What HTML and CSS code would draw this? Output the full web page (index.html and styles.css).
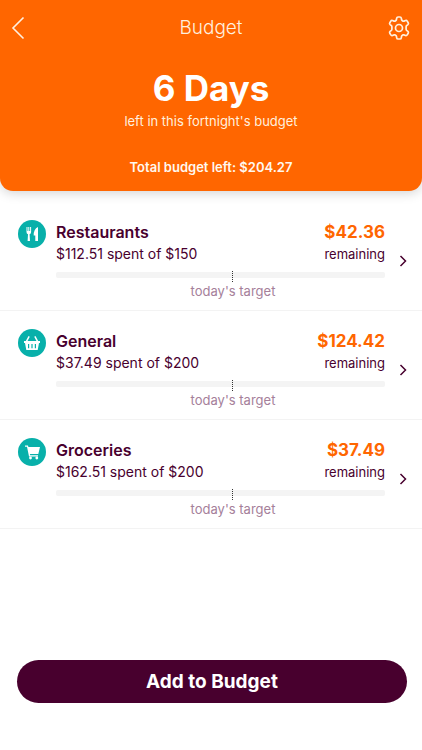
FILE: index.html
```html
<!DOCTYPE html>
<html lang="en">
<head>
<meta charset="utf-8">
<meta name="viewport" content="width=device-width, initial-scale=1">
<title>Budget</title>
<link rel="stylesheet" href="styles.css">
</head>
<body>
<header class="hero">
  <nav class="bar">
    <button class="icon-button" type="button" aria-label="Back">
      <svg width="14" height="24" viewBox="0 0 14 24" fill="none" stroke="currentColor" stroke-width="1.6"><path d="M12.500 1.500 2 12l10.500 10.500"/></svg>
    </button>
    <h1 class="bar-title">Budget</h1>
    <button class="icon-button" type="button" aria-label="Settings">
      <svg width="24" height="24" viewBox="0 0 24 24" fill="none" stroke="currentColor" stroke-width="1.700" stroke-linejoin="round"><path d="M9.700 2.200Q9.900 1 11 1h2q1.100 0 1.300 1.200l.3 1.600q.2.700.8 1l.3.200q.6.400 1.300.100l1.500-.6q1.100-.4 1.700.6l1 1.700q.6 1-.3 1.800l-1.300 1.100q-.5.500-.5 1.200v2.200q0 .7.500 1.200l1.300 1.100q.9.800.3 1.800l-1 1.700q-.6 1-1.700.6l-1.500-.6q-.7-.3-1.300.100l-.3.200q-.6.300-.8 1l-.3 1.600Q14.100 23 13 23h-2q-1.100 0-1.300-1.200l-.3-1.600q-.2-.7-.8-1l-.3-.2q-.6-.4-1.300-.1l-1.500.6q-1.100.4-1.700-.6l-1-1.700q-.6-1 .3-1.800l1.300-1.100q.5-.5.5-1.200v-2.200q0-.7-.5-1.200L3.100 8.600q-.9-.8-.3-1.800l1-1.700q.6-1 1.700-.6l1.500.6q.7.300 1.300-.1l.3-.2q.6-.3.8-1z"/><circle cx="12" cy="12" r="3.500"/></svg>
    </button>
  </nav>
  <p class="days">6 Days</p>
  <p class="period">left in this fortnight's budget</p>
  <p class="total">Total budget left: $204.27</p>
</header>
<main class="content">
  <ul class="budgets">
    <li><a class="budget" href="#restaurants">
      <span class="badge"><svg width="28" height="28" viewBox="0 0 28 28" fill="currentColor"><path d="M8.500 7h1v4h.8V7h1v4h.8V7h1v5q0 1.700-1.500 2.300l.4 6.700H9.600l.4-6.700q-1.500-.6-1.500-2.300zM20 7v14h-2.700v-5.500h-1.600q-.2-6.500 4.300-8.500z"/></svg></span>
      <span class="details">
        <span class="line"><strong class="name">Restaurants</strong><strong class="amount">$42.36</strong></span>
        <span class="line"><span class="spent">$112.51 spent of $150</span><span class="remaining">remaining</span></span>
        <span class="track"><span class="marker"></span></span>
        <span class="target">today's target</span>
      </span>
      <svg class="chevron" width="8" height="12" viewBox="0 0 8 12"><path d="M1.500 1 6.500 6l-5 5"/></svg>
    </a></li>
    <li><a class="budget" href="#general">
      <span class="badge"><svg width="28" height="28" viewBox="0 0 28 28" fill="currentColor"><path d="m10.500 7 1.300.8-2.300 4.200h9l-2.300-4.200 1.300-.8 2.700 5H22v2h-1l-1.300 7H8.300L7 14H6v-2h1.800zM10 15v4.300h1.200V15zm3.400 0v4.300h1.200V15zm3.400 0v4.300H18V15z" fill-rule="evenodd"/></svg></span>
      <span class="details">
        <span class="line"><strong class="name">General</strong><strong class="amount">$124.42</strong></span>
        <span class="line"><span class="spent">$37.49 spent of $200</span><span class="remaining">remaining</span></span>
        <span class="track"><span class="marker"></span></span>
        <span class="target">today's target</span>
      </span>
      <svg class="chevron" width="8" height="12" viewBox="0 0 8 12"><path d="M1.500 1 6.500 6l-5 5"/></svg>
    </a></li>
    <li><a class="budget" href="#groceries">
      <span class="badge"><svg width="28" height="28" viewBox="0 0 28 28" fill="currentColor"><path d="M7 7.500h3l.4 1.500H22l-1.700 7h-8.400l.3 1.200h7.800v1.300h-9L9 8.800H7z"/><circle cx="12.500" cy="20" r="1.400"/><circle cx="18.800" cy="20" r="1.400"/></svg></span>
      <span class="details">
        <span class="line"><strong class="name">Groceries</strong><strong class="amount">$37.49</strong></span>
        <span class="line"><span class="spent">$162.51 spent of $200</span><span class="remaining">remaining</span></span>
        <span class="track"><span class="marker"></span></span>
        <span class="target">today's target</span>
      </span>
      <svg class="chevron" width="8" height="12" viewBox="0 0 8 12"><path d="M1.500 1 6.500 6l-5 5"/></svg>
    </a></li>
  </ul>
  <button class="add" type="button">Add to Budget</button>
</main>
</body>
</html>
```
FILE: styles.css
```css
* { box-sizing: border-box; }

body {
  margin: 0;
  min-height: 100vh;
  display: flex;
  flex-direction: column;
  background: #fff;
  color: #48002e;
  font-family: Inter, "Liberation Sans", sans-serif;
  font-size: 14px;
  line-height: 22px;
}

h1, p, ul { margin: 0; padding: 0; }
button { font: inherit; cursor: pointer; }

.hero {
  padding: 11px 11px 13px;
  border-radius: 0 0 13px 13px;
  background: #ff6600;
  color: #fff;
  text-align: center;
  box-shadow: 0 2px 12px rgb(0 0 0 / 18%);
}

.bar {
  display: grid;
  grid-template-columns: 1fr auto 1fr;
  align-items: center;
  height: 33px;
}

.bar-title {
  color: #fff0df;
  font-size: 19px;
  font-weight: 300;
  line-height: 24px;
}

.icon-button {
  display: flex;
  padding: 0;
  border: 0;
  background: none;
  color: #fff0df;
}

.icon-button:last-child { justify-self: end; }

.days {
  margin-top: 22px;
  font-size: 35px;
  font-weight: 700;
  line-height: 44px;
}

.period {
  color: #fff0df;
  font-size: 13px;
}

.total {
  margin-top: 24px;
  color: #fff8ef;
  font-size: 13px;
  font-weight: 600;
}

.content {
  flex: 1;
  display: flex;
  flex-direction: column;
  padding-top: 11px;
}

.budgets { list-style: none; }

.budget {
  display: flex;
  gap: 10px;
  padding: 18px 15px 8px 18px;
  border-bottom: 1px solid #f3f3f3;
  color: inherit;
  text-decoration: none;
}

.badge {
  width: 28px;
  height: 28px;
  border-radius: 50%;
  background: #08b0aa;
  color: #fff;
}

.details {
  flex: 1;
  display: flex;
  flex-direction: column;
}

.line {
  display: flex;
  justify-content: space-between;
}

.name,
.amount { line-height: 24px; }

.line + .line { line-height: 20px; }

.name {
  font-size: 16px;
  font-weight: 600;
}

.amount {
  color: #ff6600;
  font-size: 17px;
  font-weight: 700;
}

.remaining { font-size: 13px; }

.track {
  position: relative;
  height: 6px;
  margin: 8px 0 2px;
  border-radius: 2px;
  background: #f4f4f4;
}

.marker {
  position: absolute;
  top: -1px;
  left: 53.5%;
  height: 11px;
  border-left: 1px dotted #333;
}

.target {
  align-self: center;
  padding-left: 25px;
  color: #a5809a;
  font-size: 13px;
}

.chevron {
  align-self: center;
  margin-left: 4px;
  fill: none;
  stroke: #48002e;
  stroke-width: 1.5;
}

.add {
  height: 43px;
  margin: auto 15px 47px 17px;
  border: 0;
  border-radius: 22px;
  background: #48002e;
  color: #fff;
  font-size: 19px;
  font-weight: 700;
}
```
